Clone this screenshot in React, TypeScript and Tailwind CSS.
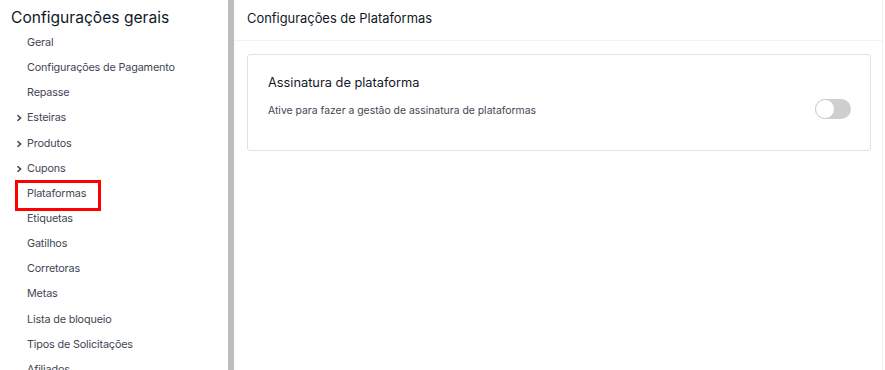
const items: { label: string; chevron?: boolean; active?: boolean }[] = [
  { label: "Geral" },
  { label: "Configurações de Pagamento" },
  { label: "Repasse" },
  { label: "Esteiras", chevron: true },
  { label: "Produtos", chevron: true },
  { label: "Cupons", chevron: true },
  { label: "Plataformas", active: true },
  { label: "Etiquetas" },
  { label: "Gatilhos" },
  { label: "Corretoras" },
  { label: "Metas" },
  { label: "Lista de bloqueio" },
  { label: "Tipos de Solicitações" },
  { label: "Afiliados" },
];

function Chevron() {
  return (
    <svg width="8" height="8" viewBox="0 0 8 8" className="absolute left-[-12px] top-[9px]">
      <path d="M2.5 1.2 L5.6 4 L2.5 6.8" fill="none" stroke="#374151" strokeWidth="1.5" />
    </svg>
  );
}

export default function App() {
  return (
    <div className="flex h-[370px] w-[885px] overflow-hidden bg-white font-['Inter',sans-serif] text-[#1f2937]">
      <aside className="w-[228px] shrink-0 pt-[8px]">
        <h2 className="pl-[11px] text-[15.6px] leading-[20px] text-[#111827]">Configurações gerais</h2>
        <ul className="mt-[2px] pl-[27px]">
          {items.map((it) => (
            <li key={it.label} className="relative h-[25.15px] text-[10.8px] tracking-[-0.15px] leading-[25px] text-[#3f4654]">
              {it.chevron && <Chevron />}
              {it.active && (
                <span className="absolute left-[-12px] top-[-1px] h-[31px] w-[86px] border-[3px] border-[#ff0000]" />
              )}
              {it.label}
            </li>
          ))}
        </ul>
      </aside>
      <div className="w-[6px] shrink-0 bg-[#bdbdbd]" />
      <main className="flex-1 border-r border-[#f0f0f0] mr-[2px]">
        <div className="h-[41px] border-b border-[#f1f3f5] pl-[13px] pt-[9px] text-[12.9px] leading-[20px] text-[#111827]">
          Configurações de Plataformas
        </div>
        <div className="ml-[13px] mr-[11px] mt-[13px] rounded-[3px] border border-[#dde2e6] px-[20px] pt-[18px] pb-[31px] flex items-center justify-between">
          <div>
            <div className="text-[12.8px] leading-[20px] text-[#111827]">Assinatura de plataforma</div>
            <div className="mt-[10px] text-[10.4px] leading-[16px] text-[#3f4654]">
              Ative para fazer a gestão de assinatura de plataformas
            </div>
          </div>
          <div className="mt-[26px] mr-[-1px] relative h-[20px] w-[36px] rounded-full bg-[#cfcfcf]">
            <span className="absolute left-0 top-0 h-[20px] w-[20px] rounded-full border border-[#cfcfcf] bg-white" />
          </div>
        </div>
      </main>
    </div>
  );
}
